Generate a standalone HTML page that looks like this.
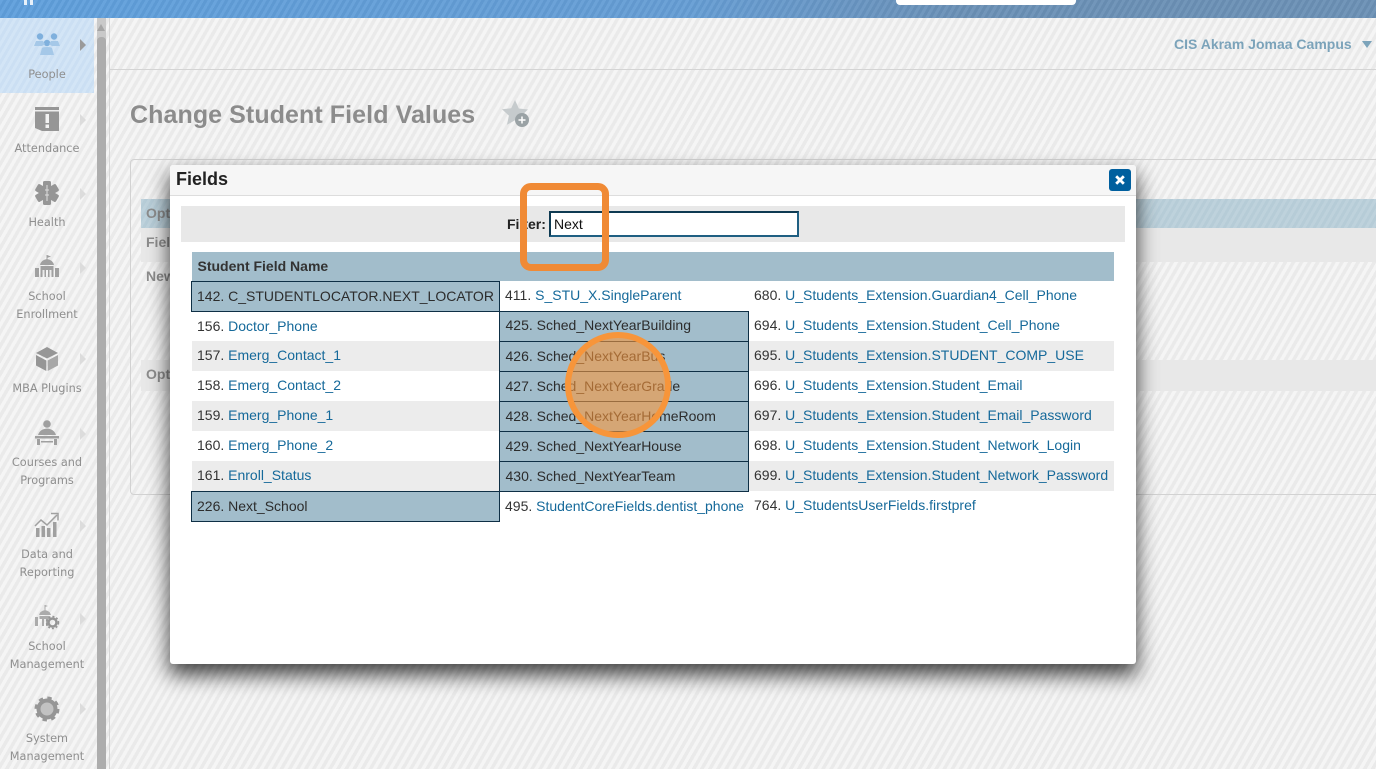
<!DOCTYPE html>
<html><head><meta charset="utf-8"><title>Change Student Field Values</title>
<style>
html,body{margin:0;padding:0;width:1376px;height:769px;overflow:hidden}
body{position:relative;font-family:"Liberation Sans",sans-serif;font-size:14px;color:#333;background:repeating-linear-gradient(120deg,#f5f5f5 0,#f5f5f5 3.5px,#eaeaea 3.5px,#eaeaea 7px)}
.a{position:absolute}
#top{left:0;top:0;width:1376px;height:18px;background:repeating-linear-gradient(120deg,rgba(255,255,255,.05) 0,rgba(255,255,255,.05) 3px,rgba(0,0,0,.03) 3px,rgba(0,0,0,.03) 6px),linear-gradient(90deg,#5f9fdc 0,#659dd4 50%,#6a90b6 70%,#6b90b5 100%)}
.nav{position:absolute;left:0;width:94px;margin-top:1px;text-align:center;font-family:"DejaVu Sans",sans-serif;font-size:11.3px;line-height:18px;color:#8f8f8f}
.ar{position:absolute;left:80px;width:0;height:0;border-left:6px solid #dcdcdc;border-top:6px solid transparent;border-bottom:6px solid transparent}
svg{position:absolute;overflow:visible}
.c{position:absolute;height:30px;line-height:30px;white-space:nowrap;box-sizing:border-box;padding-left:6px;color:#333}
.c a{color:#15699a;text-decoration:none}
.s{background:#ececec}
.h{background:#a2bdcb;border:1px solid #0e2f45;color:#2c2c2c;line-height:28px}
</style></head><body>
<div class="a" id="top"></div>
<div class="a" style="left:24px;top:0;width:3px;height:5px;background:#e8f1fa"></div>
<div class="a" style="left:30px;top:0;width:3px;height:5px;background:#e8f1fa"></div>
<div class="a" style="left:896px;top:0;width:180px;height:5px;background:#fff;border-radius:0 0 4px 4px"></div>

<div class="a" style="left:0;top:18px;width:94px;height:75px;background:repeating-linear-gradient(120deg,#d3e5f6 0,#d3e5f6 3px,#cbdff3 3px,#cbdff3 6px)"></div>
<div class="a" style="left:97px;top:18px;width:9px;height:751px;background:#c9c9c9"></div>
<div class="a" style="left:97px;top:37px;width:9px;height:732px;background:#adadad;border-radius:4px 4px 0 0"></div>
<div class="a" style="left:97px;top:24px;width:0;height:0;border-left:4.5px solid transparent;border-right:4.5px solid transparent;border-bottom:7px solid #a5a5a5"></div>
<div class="a" style="left:109px;top:18px;width:1px;height:751px;background:#d6d6d6"></div>
<div class="a" style="left:110px;top:69px;width:1266px;height:1px;background:#d4d4d4"></div>

<!-- People -->
<svg style="left:34px;top:32px" width="26" height="26" viewBox="0 0 26 26" fill="#7fb0dd">
<circle cx="6" cy="4.500" r="3.200"/><circle cx="20" cy="4.500" r="3.200"/><circle cx="13" cy="11" r="3.200"/>
<path d="M0 14l2-5h7l2 3-3 2zM26 14l-2-5h-7l-2 3 3 2z" fill="#a5c8e8"/>
<path d="M6 23l2-7q1-1 5-1t5 1l2 7z" fill="#a5c8e8"/></svg>
<div class="ar" style="border-left-color:#9a9a9a;top:39px"></div>
<div class="nav" style="top:65px">People</div>

<!-- Attendance -->
<svg style="left:35px;top:107px" width="24" height="24" viewBox="0 0 24 24" fill="#969696">
<path d="M0 0h24v24H7l-7-3z"/><rect x="0" y="3" width="24" height="1.500" fill="#eee"/>
<rect x="10.500" y="7" width="3.500" height="9" fill="#f2f2f2"/><rect x="10.500" y="17.500" width="3.500" height="3.500" fill="#f2f2f2"/></svg>
<div class="ar" style="top:114px"></div>
<div class="nav" style="top:139px">Attendance</div>

<!-- Health -->
<svg style="left:35px;top:181px" width="24" height="24" viewBox="0 0 24 24" fill="#969696">
<g><rect x="8" y="0" width="8" height="24" rx="1.500"/><rect x="8" y="0" width="8" height="24" rx="1.500" transform="rotate(60 12 12)"/><rect x="8" y="0" width="8" height="24" rx="1.500" transform="rotate(120 12 12)"/></g>
<path d="M12 4v16M10 9h4M10 14h4" stroke="#ddd" stroke-width="1" fill="none"/></svg>
<div class="ar" style="top:188px"></div>
<div class="nav" style="top:213px">Health</div>

<!-- School Enrollment -->
<svg style="left:35px;top:254px" width="24" height="24" viewBox="0 0 24 24" fill="#a0a0a0">
<path d="M12 1v5" stroke="#a0a0a0" fill="none"/><path d="M12 1l4 1.500-4 1.500z"/>
<path d="M5 11q1-5 7-6q6 1 7 6z"/>
<path d="M0 14h4v9H0zM20 14h4v9h-4zM5.500 12h13v11h-2v-7h-2v7h-1.500v-7h-2v7H9.500v-7h-2v7h-2z"/></svg>
<div class="ar" style="top:262px"></div>
<div class="nav" style="top:287px;line-height:18px">School<br>Enrollment</div>

<!-- MBA -->
<svg style="left:35px;top:347px" width="24" height="24" viewBox="0 0 24 24" fill="#969696">
<path d="M12 0l11 6-11 5.500L1 6z"/><path d="M1 8l10.300 5.500V24L1 18.500z"/><path d="M23 8l-10.300 5.500V24L23 18.500z" fill="#a8a8a8"/></svg>
<div class="ar" style="top:353px"></div>
<div class="nav" style="top:379px">MBA Plugins</div>

<!-- Courses -->
<svg style="left:35px;top:420px" width="24" height="26" viewBox="0 0 24 26" fill="#a0a0a0">
<circle cx="12" cy="4" r="3.800"/><path d="M3 15q2-6 9-6.500q7 .5 9 6.500z"/>
<rect x="0" y="16" width="24" height="2.500"/><path d="M2 19h3v6H2zM19 19h3v6h-3z"/><rect x="6" y="21" width="12" height="1.500"/></svg>
<div class="ar" style="top:428px"></div>
<div class="nav" style="top:453px">Courses and<br>Programs</div>

<!-- Data -->
<svg style="left:35px;top:513px" width="24" height="24" viewBox="0 0 24 24" fill="#a0a0a0">
<rect x="1" y="15" width="3.500" height="9"/><rect x="6.500" y="13" width="3.500" height="11"/><rect x="12" y="15" width="3.500" height="9"/><rect x="18" y="9" width="3.500" height="15"/>
<path d="M0 13l6-6 6 5L22 2" stroke="#a0a0a0" stroke-width="1.500" fill="none"/><path d="M16 0.500h7v7" stroke="#a0a0a0" stroke-width="1.500" fill="none"/></svg>
<div class="ar" style="top:520px"></div>
<div class="nav" style="top:545px">Data and<br>Reporting</div>

<!-- School mgmt -->
<svg style="left:35px;top:605px" width="24" height="25" viewBox="0 0 24 25" fill="#ababab">
<path d="M10 0v5" stroke="#ababab" fill="none"/><path d="M10 0l3 1-3 1z"/><path d="M4 10q1-4 6-5q5 1 6 5z"/>
<path d="M0 12h3v9H0zM4.500 11h10v3h-1.500v7h-2v-7h-2v7h-2v-7H4.500z"/>
<circle cx="17.500" cy="17.500" r="4" fill="none" stroke="#959595" stroke-width="2.500"/><circle cx="17.500" cy="17.500" r="6" fill="none" stroke="#959595" stroke-width="1.500" stroke-dasharray="2 2"/></svg>
<div class="ar" style="top:613px"></div>
<div class="nav" style="top:637px">School<br>Management</div>

<!-- System -->
<svg style="left:35px;top:697px" width="24" height="24" viewBox="0 0 24 24">
<circle cx="12" cy="12" r="8.500" fill="#c2c2c2" stroke="#969696" stroke-width="4"/>
<circle cx="12" cy="12" r="11" fill="none" stroke="#969696" stroke-width="3" stroke-dasharray="4.300 4.340"/></svg>
<div class="ar" style="top:703px"></div>
<div class="nav" style="top:729px">System<br>Management</div>

<div class="a" style="left:1174px;top:36px;font-weight:bold;font-size:14px;line-height:17px;color:#7ba3ba;white-space:nowrap">CIS Akram Jomaa Campus</div>
<div class="a" style="left:1362px;top:41px;width:0;height:0;border-left:5.500px solid transparent;border-right:5.500px solid transparent;border-top:7px solid #7ba3ba"></div>

<div class="a" style="left:130px;top:100px;font-weight:bold;font-size:25px;line-height:30px;color:#8c8c8c;white-space:nowrap;letter-spacing:.08px">Change Student Field Values</div>
<svg style="left:502px;top:100px" width="28" height="28" viewBox="0 0 28 28">
<path d="M13 0l3.800 8.500 9.200 1-6.800 6.300 1.900 9.200-8.100-4.700L5 24.800l1.900-9.200L0 9.300l9.200-1z" fill="#c6cbcd"/>
<circle cx="20" cy="20" r="7" fill="#9aa2a5"/><path d="M16.500 20h7M20 16.500v7" stroke="#fff" stroke-width="1.500"/></svg>

<div class="a" style="left:130px;top:159px;width:1300px;height:336px;border:1px solid #d2d2d2;border-radius:4px;box-sizing:border-box"></div>
<div class="a" style="left:141px;top:199px;width:1235px;height:29px;background:repeating-linear-gradient(120deg,#bed2dc 0,#bed2dc 3px,#b6ccd7 3px,#b6ccd7 6px)"></div>
<div class="a" style="left:141px;top:228px;width:1235px;height:34px;background:#e8e8e8"></div>
<div class="a" style="left:141px;top:360px;width:1235px;height:31px;background:#e8e8e8"></div>
<div class="a" style="left:146px;top:205px;font-weight:bold;color:#8c8c8c">Opt</div>
<div class="a" style="left:146px;top:234px;font-weight:bold;color:#8c8c8c">Fiel</div>
<div class="a" style="left:146px;top:268px;font-weight:bold;color:#8c8c8c">New</div>
<div class="a" style="left:146px;top:366px;font-weight:bold;color:#8c8c8c">Opt</div>

<!-- Modal -->
<div class="a" style="left:170px;top:165px;width:966px;height:499px;background:#fff;border-radius:3px;box-shadow:0 10px 20px 1px rgba(0,0,0,.72)"></div>
<div class="a" style="left:170px;top:165px;width:966px;height:30px;background:#f6f6f6;border-bottom:1px solid #ddd;border-radius:3px 3px 0 0"></div>
<div class="a" style="left:176px;top:169px;font-weight:bold;font-size:18px;line-height:20px;color:#222">Fields</div>
<div class="a" style="left:1109px;top:169px;width:22px;height:22px;background:#005f9e;border-radius:3px"></div>
<svg style="left:1115px;top:175px" width="10" height="10" viewBox="0 0 10 10"><path d="M1.200 1.200l7.600 7.600M8.800 1.200L1.200 8.800" stroke="#fff" stroke-width="2.800"/></svg>

<div class="a" style="left:181px;top:206px;width:944px;height:36px;background:#e8e8e8"></div>
<div class="a" style="left:507px;top:216px;font-weight:bold;line-height:16px;color:#222">Filter:</div>
<div class="a" style="left:549px;top:211px;width:250px;height:26px;box-sizing:border-box;background:#fff;border:2px solid;border-color:#0e3a52 #1f5f82 #1f5f82 #0e3a52;padding-left:3px;line-height:22px;color:#111">Next</div>

<div class="a" style="left:192px;top:252px;width:922px;height:29px;background:#a2bdcb"></div>
<div class="a" style="left:197.500px;top:258px;font-weight:bold;line-height:16px;color:#333">Student Field Name</div>

<div class="a s" style="left:192px;top:341px;width:922px;height:30px"></div>
<div class="a s" style="left:192px;top:401px;width:922px;height:30px"></div>
<div class="a s" style="left:192px;top:461px;width:922px;height:30px"></div>

<div class="c h" style="left:191px;top:281px;width:309px;height:31px;padding-left:5px">142. C_STUDENTLOCATOR.NEXT_LOCATOR</div>
<div class="c" style="left:191px;top:311px">156. <a>Doctor_Phone</a></div>
<div class="c" style="left:191px;top:340px">157. <a>Emerg_Contact_1</a></div>
<div class="c" style="left:191px;top:370px">158. <a>Emerg_Contact_2</a></div>
<div class="c" style="left:191px;top:400px">159. <a>Emerg_Phone_1</a></div>
<div class="c" style="left:191px;top:430px">160. <a>Emerg_Phone_2</a></div>
<div class="c" style="left:191px;top:460px">161. <a>Enroll_Status</a></div>
<div class="c h" style="left:191px;top:491px;width:309px;height:31px;padding-left:5px">226. Next_School</div>

<div class="c" style="left:499px;top:280px">411. <a>S_STU_X.SingleParent</a></div>
<div class="c h" style="left:499px;top:311px;width:250px;height:31px;line-height:27px;padding-left:5.500px">425. Sched_NextYearBuilding</div>
<div class="c h" style="left:499px;top:341px;width:250px;height:31px;padding-left:5.500px">426. Sched_NextYearBus</div>
<div class="c h" style="left:499px;top:371px;width:250px;height:31px;padding-left:5.500px">427. Sched_NextYearGrade</div>
<div class="c h" style="left:499px;top:401px;width:250px;height:31px;padding-left:5.500px">428. Sched_NextYearHomeRoom</div>
<div class="c h" style="left:499px;top:431px;width:250px;height:31px;padding-left:5.500px">429. Sched_NextYearHouse</div>
<div class="c h" style="left:499px;top:461px;width:250px;height:31px;padding-left:5.500px">430. Sched_NextYearTeam</div>
<div class="c" style="left:499px;top:491px">495. <a>StudentCoreFields.dentist_phone</a></div>

<div class="c" style="left:748px;top:280px">680. <a>U_Students_Extension.Guardian4_Cell_Phone</a></div>
<div class="c" style="left:748px;top:310px">694. <a>U_Students_Extension.Student_Cell_Phone</a></div>
<div class="c" style="left:748px;top:340px">695. <a>U_Students_Extension.STUDENT_COMP_USE</a></div>
<div class="c" style="left:748px;top:370px">696. <a>U_Students_Extension.Student_Email</a></div>
<div class="c" style="left:748px;top:400px">697. <a>U_Students_Extension.Student_Email_Password</a></div>
<div class="c" style="left:748px;top:430px">698. <a>U_Students_Extension.Student_Network_Login</a></div>
<div class="c" style="left:748px;top:460px">699. <a>U_Students_Extension.Student_Network_Password</a></div>
<div class="c" style="left:748px;top:490px">764. <a>U_StudentsUserFields.firstpref</a></div>

<div class="a" style="left:520px;top:183px;width:89px;height:88px;box-sizing:border-box;border:7px solid #f08a35;border-radius:11px"></div>
<div class="a" style="left:565px;top:332px;width:106px;height:106px;box-sizing:border-box;border:6px solid #f7953a;border-radius:50%;background:rgba(247,150,60,.6)"></div>
</body></html>
